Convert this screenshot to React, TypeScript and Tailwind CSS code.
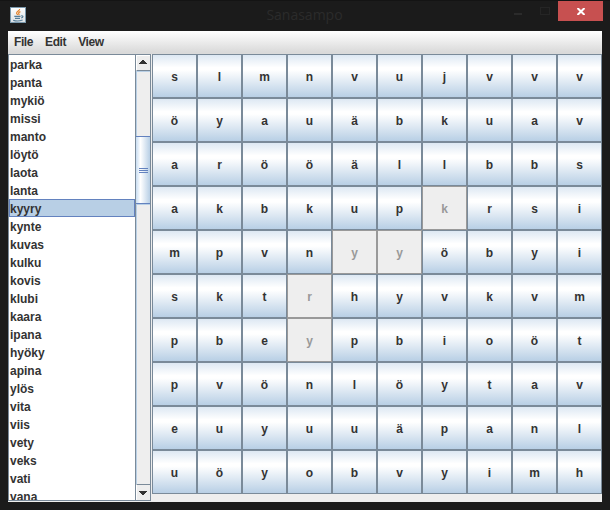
import React from "react";

const words = [
  "parka", "panta", "mykiö", "missi", "manto", "löytö", "laota", "lanta", "kyyry",
  "kynte", "kuvas", "kulku", "kovis", "klubi", "kaara", "ipana", "hyöky", "apina",
  "ylös", "vita", "viis", "vety", "veks", "vati", "vana",
];
const selectedWord = "kyyry";

const letters = [
  "slmnvujvvv",
  "öyauäbkuav",
  "arööällbbs",
  "akbkupkrsi",
  "mpvnyyöbyi",
  "sktrhyvkvm",
  "pbeypbioöt",
  "pvönlöytav",
  "euyuuäpanl",
  "uöyobvyimh",
];
const used = new Set(["3-6", "4-4", "4-5", "5-3", "6-3"]);

function JavaIcon() {
  return (
    <svg width="16" height="16" viewBox="0 0 16 16">
      <defs>
        <linearGradient id="cup" x1="0" y1="0" x2="0" y2="1">
          <stop offset="0" stopColor="#ffffff" />
          <stop offset="1" stopColor="#dbe0e4" />
        </linearGradient>
      </defs>
      <rect x=".5" y=".5" width="15" height="15" fill="url(#cup)" stroke="#7b99ad" />
      <path d="M9.6 2c.6 1.6-3.5 2.4-3 4.2.2.6.9 1 1 1.8M10.4 4.6c-1.6.6-2.3 1.3-1.5 2.2.4.5.2.9-.4 1.3" fill="none" stroke="#e4832b" strokeWidth="1.2" />
      <path d="M4.3 9.4h6.2M5 11.4h5M11.2 8.9c2.3-.5 2.4 1.4 0 2.2M3.2 13.2c2.2.9 6.8.8 9.4-.2" fill="none" stroke="#557d98" strokeWidth="1.1" />
    </svg>
  );
}

function TitleBar() {
  return (
    <header className="flex h-[31px] shrink-0 border-t border-[#141414] font-normal">
      <div className="w-[200px] pl-[10px] pt-[6px]">
        <JavaIcon />
      </div>
      <div className="w-[209px] pt-[4px] text-center font-['Open_Sans','Noto_Sans',sans-serif] text-[14px] leading-[20px] text-[#2b2b2b]">
        Sanasampo
      </div>
      <div className="flex flex-1 justify-end pr-[7px]">
        <svg width="54" height="20" viewBox="0 0 54 20" shapeRendering="crispEdges">
          <rect x="10" y="12" width="8" height="2" fill="#2b2b2b" />
          <rect x="36.5" y="6.5" width="9" height="7" fill="none" stroke="#252525" />
        </svg>
        <div className="flex h-5 w-[45px] justify-center bg-[#c75050] pl-[1px] pt-[7px]">
          <svg width="8" height="7" viewBox="0 0 8 7">
            <path d="M.5 0 7.5 7M7.5 0 .5 7" stroke="#fff" strokeWidth="2" />
          </svg>
        </div>
      </div>
    </header>
  );
}

function Arrow({ down = false }: { down?: boolean }) {
  return (
    <svg width="8" height="4" viewBox="0 0 8 4" shapeRendering="crispEdges">
      <path
        d={down ? "M0 0h8v1h-1v1h-1v1h-1v1h-2v-1h-1v-1h-1v-1h-1z" : "M3 0h2v1h1v1h1v1h1v1h-8v-1h1v-1h1v-1h1z"}
        fill="#333"
      />
    </svg>
  );
}

function ScrollBar() {
  return (
    <div className="flex w-[15px] shrink-0 flex-col border-l border-[#7a8a99] bg-[#eee]">
      <div className="flex h-4 justify-start border-b border-b-[#7a8a99] border-l border-l-white border-t border-t-white pl-[2px] pt-[4px]">
        <Arrow />
      </div>
      <div className="h-[65px] border-l border-t border-[#b8cfe5]" />
      <div className="flex h-[68px] items-center justify-center border-y border-[#6382bf] bg-[linear-gradient(to_right,#c8ddf2_0%,#ffffff_32%,#b8cfe5_100%)]">
        <div className="flex w-[9px] flex-col gap-px">
          <div className="h-px bg-[#6382bf]" />
          <div className="h-px bg-[#6382bf]" />
          <div className="h-px bg-[#6382bf]" />
        </div>
      </div>
      <div className="flex-1 border-l border-t border-[#b8cfe5]" />
      <div className="flex h-4 border-t border-t-[#7a8a99] border-l border-l-white pl-[2px] pt-[6px]">
        <Arrow down />
      </div>
    </div>
  );
}

function WordList() {
  return (
    <div className="flex h-[447px] w-[143px] shrink-0 border border-[#7a8a99] bg-white">
      <ul className="min-w-0 flex-1 overflow-hidden">
        {words.map((word) => (
          <li
            key={word}
            className={
              word === selectedWord
                ? "flex h-[18px] items-center border border-[#6382bf] bg-[#b8cfe5]"
                : "flex h-[18px] items-center border border-transparent"
            }
          >
            <span className="mt-[2px] leading-[14px]">{word}</span>
          </li>
        ))}
      </ul>
      <ScrollBar />
    </div>
  );
}

function LetterGrid() {
  return (
    <div className="ml-px grid h-[440px] w-[450px] grid-cols-10 grid-rows-10">
      {letters.flatMap((row, r) =>
        [...row].map((letter, c) => (
          <div
            key={`${r}-${c}`}
            className={
              used.has(`${r}-${c}`)
                ? "flex items-center justify-center border border-[#999] bg-[#eee] pt-[2px] text-[#999]"
                : "flex items-center justify-center border border-[#7a8a99] bg-[linear-gradient(to_bottom,#dde8f3_0%,#ffffff_30%,#ffffff_36%,#b8cfe5_100%)] pt-[2px]"
            }
          >
            {letter}
          </div>
        ))
      )}
    </div>
  );
}

export default function App() {
  return (
    <div className="flex h-[510px] w-[610px] flex-col overflow-hidden bg-[#1b1b1b] font-['Liberation_Sans',Arial,sans-serif] text-[12px] font-bold leading-[14px] text-[#333]">
      <TitleBar />
      <main className="mx-2 flex h-[471px] w-[594px] flex-col bg-[#eee]">
        <nav className="flex h-[23px] shrink-0 gap-3 border-b-2 border-[#dadada] bg-[linear-gradient(to_bottom,#ffffff,#dadada)] pl-[6px] pt-[4px] tracking-[-0.4px]">
          <span>File</span>
          <span>Edit</span>
          <span>View</span>
        </nav>
        <div className="flex">
          <WordList />
          <LetterGrid />
        </div>
      </main>
    </div>
  );
}
